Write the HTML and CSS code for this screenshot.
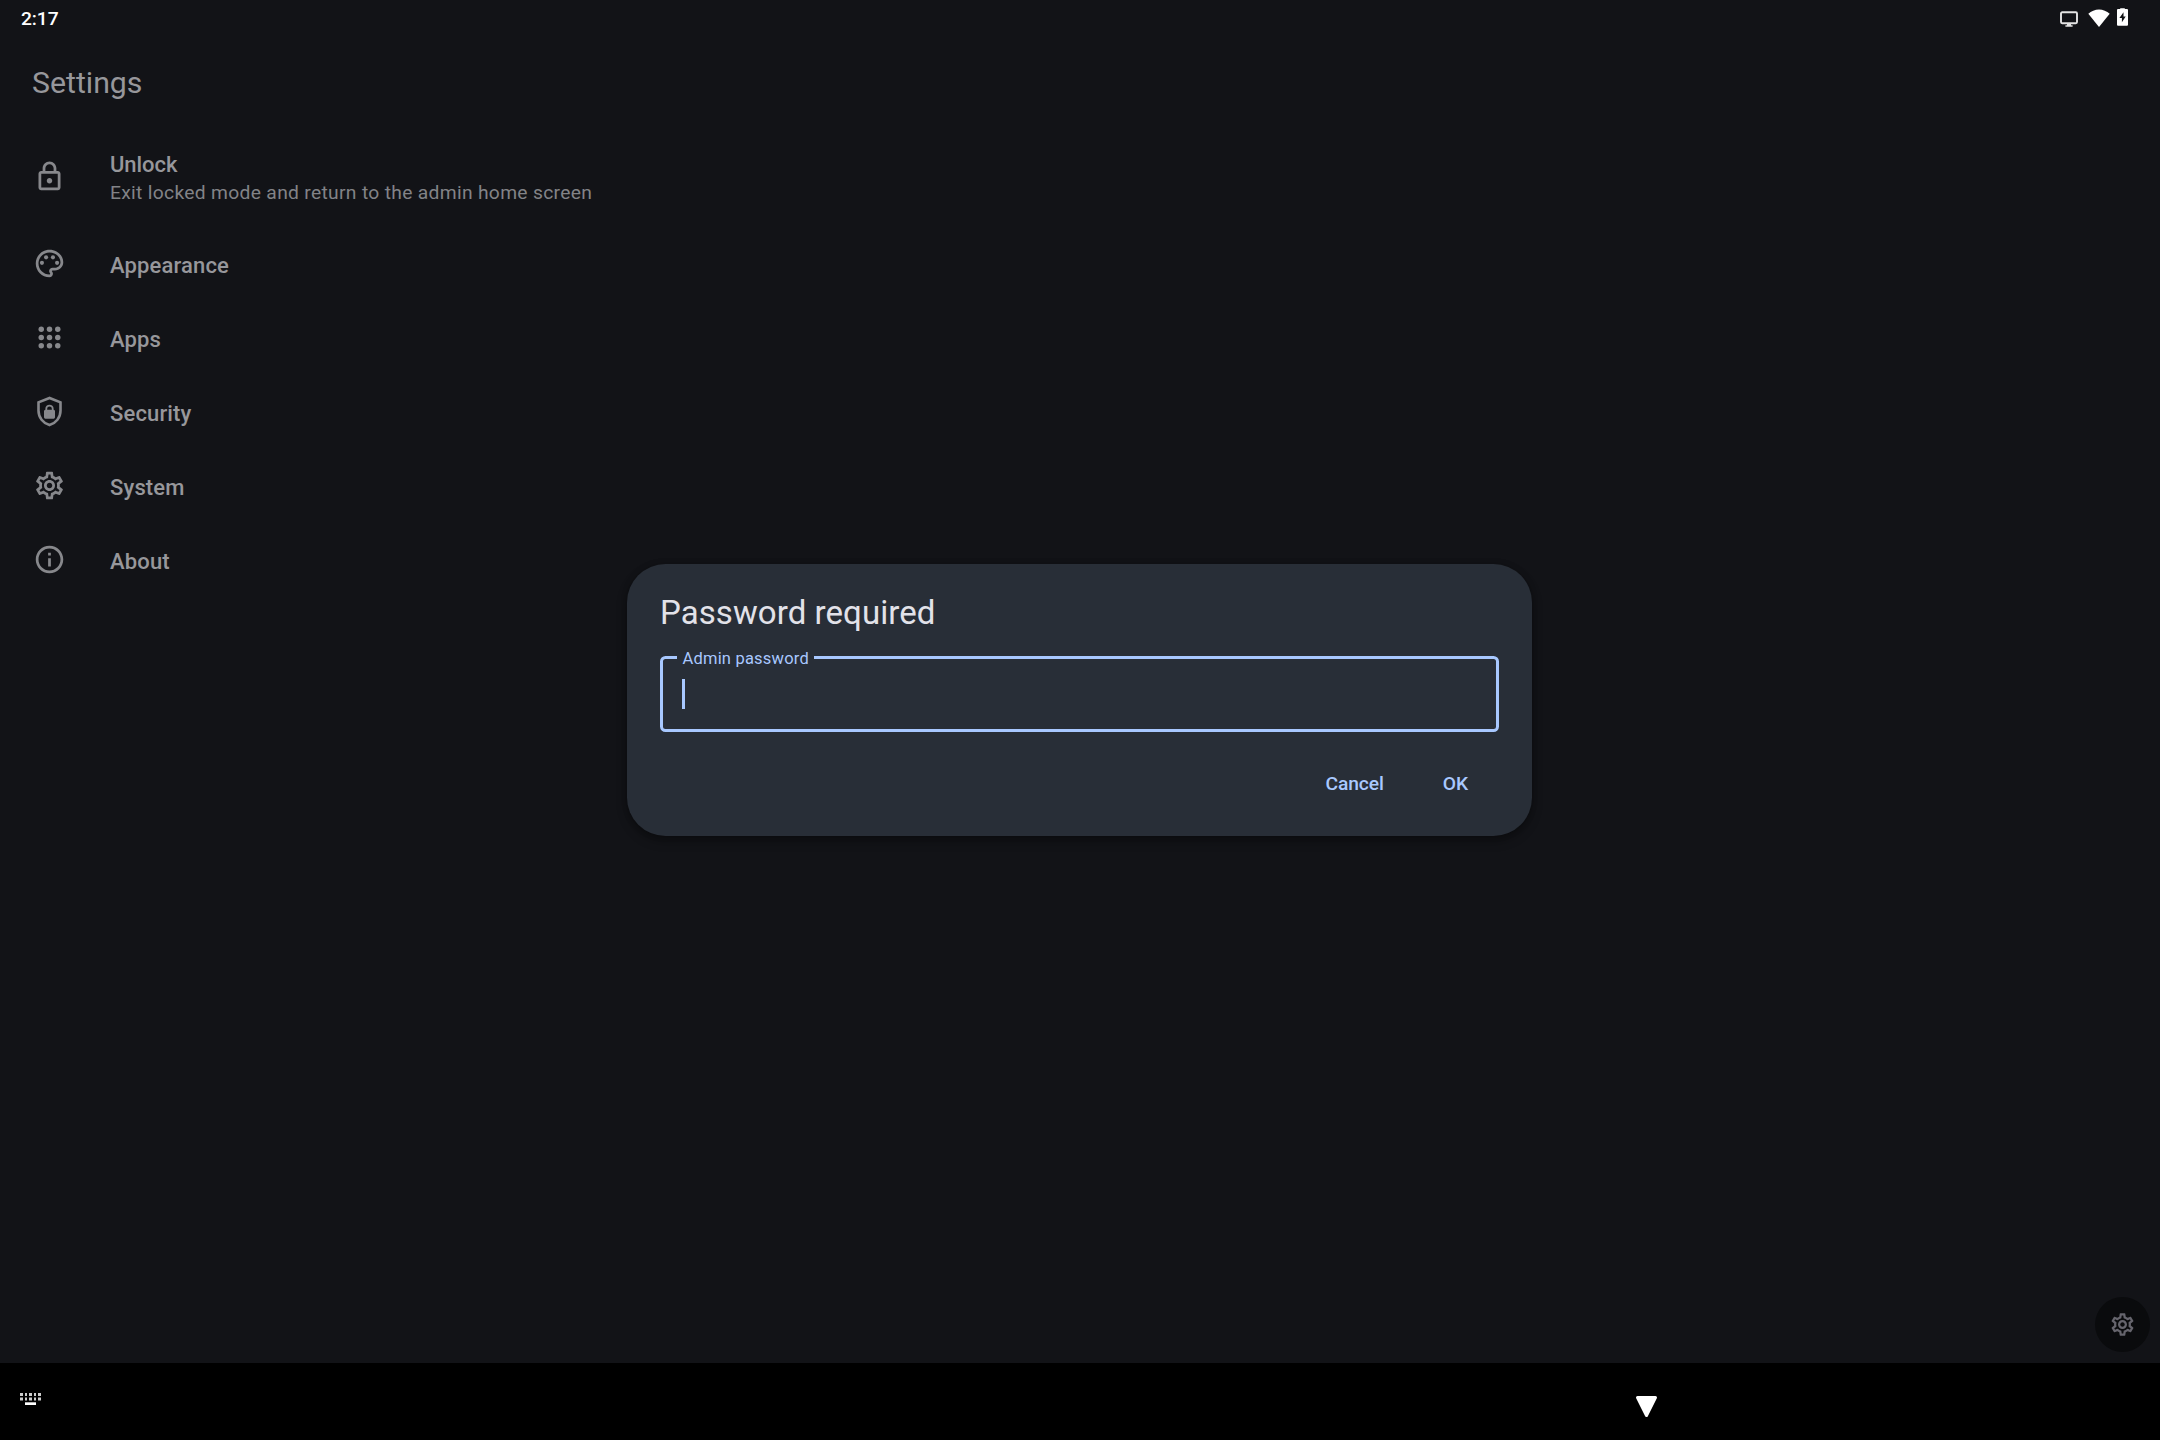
FILE: index.html
```html
<!DOCTYPE html>
<html lang="en">
<head>
<meta charset="utf-8">
<title>Settings</title>
<link rel="stylesheet" href="styles.css">
</head>
<body>
<svg class="defs" width="0" height="0" aria-hidden="true">
  <symbol id="gear" viewBox="0 0 24 24"><path d="M19.43 12.98c.04-.32.07-.64.07-.98 0-.34-.03-.66-.07-.98l2.11-1.65c.19-.15.24-.42.12-.64l-2-3.46c-.09-.16-.26-.25-.44-.25-.06 0-.12.01-.17.03l-2.49 1c-.52-.4-1.08-.73-1.69-.98l-.38-2.65C14.46 2.18 14.25 2 14 2h-4c-.25 0-.46.18-.49.42l-.38 2.65c-.61.25-1.17.59-1.69.98l-2.49-1c-.06-.02-.12-.03-.18-.03-.17 0-.34.09-.43.25l-2 3.46c-.13.22-.07.49.12.64l2.11 1.65c-.04.32-.07.65-.07.98 0 .33.03.66.07.98l-2.11 1.65c-.19.15-.24.42-.12.64l2 3.46c.09.16.26.25.44.25.06 0 .12-.01.17-.03l2.49-1c.52.4 1.08.73 1.69.98l.38 2.65c.03.24.24.42.49.42h4c.25 0 .46-.18.49-.42l.38-2.65c.61-.25 1.17-.59 1.69-.98l2.49 1c.06.02.12.03.18.03.17 0 .34-.09.43-.25l2-3.46c.12-.22.07-.49-.12-.64l-2.11-1.65zm-1.98-1.71c.04.31.05.52.05.73 0 .21-.02.43-.05.73l-.14 1.13.89.7 1.08.84-.7 1.21-1.27-.51-1.04-.42-.9.68c-.43.32-.84.56-1.25.73l-1.06.43-.16 1.13-.2 1.35h-1.4l-.19-1.35-.16-1.13-1.06-.43c-.43-.18-.83-.41-1.23-.71l-.91-.7-1.06.43-1.27.51-.7-1.21 1.08-.84.89-.7-.14-1.13c-.03-.31-.05-.54-.05-.74s.02-.43.05-.73l.14-1.13-.89-.7-1.08-.84.7-1.21 1.27.51 1.04.42.9-.68c.43-.32.84-.56 1.25-.73l1.06-.43.16-1.13.2-1.35h1.39l.19 1.35.16 1.13 1.06.43c.43.18.83.41 1.23.71l.91.7 1.06-.43 1.27-.51.7 1.21-1.07.85-.89.7.14 1.13zM12 8c-2.21 0-4 1.79-4 4s1.79 4 4 4 4-1.79 4-4-1.79-4-4-4zm0 6c-1.1 0-2-.9-2-2s.9-2 2-2 2 .9 2 2-.9 2-2 2z"/></symbol>
</svg>
<div class="screen">
  <header class="status">
    <span class="clock">2:17</span>
    <div class="status-icons">
      <svg class="i-cast" viewBox="0 0 18 17"><rect x="1" y="1.2" width="16" height="11" rx="1.2" fill="none" stroke="#e4e4e4" stroke-width="1.9"/><path d="M7 12h4v2.2h1.6v1.6H5.400v-1.600H7z" fill="#e4e4e4"/></svg>
      <svg class="i-wifi" viewBox="0 0 22 18"><path d="M11 18 .3 4.700C3.200 2 7 .4 11 .4S18.800 2 21.700 4.700z" fill="#fff"/></svg>
      <svg class="i-battery" viewBox="0 0 11 18"><path d="M3.200 1V.2h4.600V1H10q1 0 1 1v14.800q0 1-1 1H1q-1 0-1-1V2q0-1 1-1z" fill="#fff"/><path d="M6.500 4.300 2.400 10h2.500v4.300L8.700 8.600H6.500z" fill="#121317"/></svg>
    </div>
  </header>
  <h1 class="title">Settings</h1>
  <main class="list">
    <div class="row row-tall">
      <svg class="icon" viewBox="0 0 24 24"><path d="M18 8h-1V6c0-2.760-2.240-5-5-5S7 3.240 7 6v2H6c-1.100 0-2 .9-2 2v10c0 1.100.9 2 2 2h12c1.100 0 2-.9 2-2V10c0-1.100-.9-2-2-2zM9 6c0-1.660 1.340-3 3-3s3 1.340 3 3v2H9V6zm9 14H6V10h12v10zm-6-3c1.100 0 2-.9 2-2s-.9-2-2-2-2 .9-2 2 .9 2 2 2z"/></svg>
      <div class="texts"><div class="name">Unlock</div><div class="sub">Exit locked mode and return to the admin home screen</div></div>
    </div>
    <div class="row">
      <svg class="icon" viewBox="0 0 24 24"><path d="M12 22C6.490 22 2 17.510 2 12S6.490 2 12 2s10 4.040 10 9c0 3.310-2.690 6-6 6h-1.770c-.28 0-.5.22-.5.5 0 .12.05.23.13.33.41.47.64 1.060.64 1.670 0 1.380-1.120 2.500-2.500 2.500zm0-18c-4.410 0-8 3.590-8 8s3.590 8 8 8c.28 0 .5-.22.5-.5 0-.16-.08-.28-.14-.35-.41-.46-.63-1.050-.63-1.650 0-1.380 1.120-2.500 2.500-2.500H16c2.210 0 4-1.790 4-4 0-3.860-3.590-7-8-7z"/><circle cx="6.500" cy="11.500" r="1.500"/><circle cx="9.500" cy="7.500" r="1.500"/><circle cx="14.500" cy="7.500" r="1.500"/><circle cx="17.500" cy="11.500" r="1.500"/></svg>
      <div class="name">Appearance</div>
    </div>
    <div class="row">
      <svg class="icon" viewBox="0 0 24 24"><circle cx="6" cy="6" r="2"/><circle cx="12" cy="6" r="2"/><circle cx="18" cy="6" r="2"/><circle cx="6" cy="12" r="2"/><circle cx="12" cy="12" r="2"/><circle cx="18" cy="12" r="2"/><circle cx="6" cy="18" r="2"/><circle cx="12" cy="18" r="2"/><circle cx="18" cy="18" r="2"/></svg>
      <div class="name">Apps</div>
    </div>
    <div class="row">
      <svg class="icon" viewBox="0 0 24 24"><path d="M12 2.150 4 5.300V11.500c0 4.900 3.300 8.900 8 10.400 4.700-1.500 8-5.500 8-10.400V5.300z" fill="none" stroke="currentColor" stroke-width="1.900"/><path d="M9 10.700V10a3 3 0 0 1 6 0v.7q1 .1 1 1v4.500q0 1-1 1H9q-1 0-1-1v-4.500q0-.9 1-1zm1.300 0h3.400V10a1.700 1.700 0 0 0-3.400 0z"/></svg>
      <div class="name">Security</div>
    </div>
    <div class="row">
      <svg class="icon"><use href="#gear"/></svg>
      <div class="name">System</div>
    </div>
    <div class="row">
      <svg class="icon" viewBox="0 0 24 24"><path d="M11 7h2v2h-2zm0 4h2v6h-2zm1-9C6.480 2 2 6.480 2 12s4.480 10 10 10 10-4.480 10-10S17.520 2 12 2zm0 18c-4.410 0-8-3.590-8-8s3.590-8 8-8 8 3.590 8 8-3.590 8-8 8z"/></svg>
      <div class="name">About</div>
    </div>
  </main>
  <footer class="nav">
    <svg class="i-keys" viewBox="0 0 21 13"><path d="M0 0h3v3H0zM5 0h2v3H5zM9 0h3v3H9zM14 0h2v3h-2zM18 0h3v3h-3zM0 4.500h3v3H0zM5 4.500h2v3H5zM9 4.500h3v3H9zM14 4.500h2v3h-2zM18 4.500h3v3h-3z" fill="#ccc"/><path d="M5 9.300h11v2.700H5z" fill="#fff"/></svg>
    <svg class="i-back" viewBox="0 0 23 22"><path d="M2.500 1.500h18L11.500 19.500z" fill="#fff" stroke="#fff" stroke-width="3" stroke-linejoin="round"/></svg>
  </footer>
</div>
<div class="fab"><svg class="fab-icon"><use href="#gear"/></svg></div>
<section class="dialog">
  <h2 class="dialog-title">Password required</h2>
  <div class="field"><span class="label">Admin password</span><span class="caret"></span></div>
  <div class="actions"><span>Cancel</span><span>OK</span></div>
</section>
</body>
</html>
```
FILE: styles.css
```css
* { box-sizing: border-box; }
body { margin: 0; background: #121317; font-family: Roboto, "Liberation Sans", sans-serif; overflow: hidden; }
.defs { display: block; position: absolute; }
.screen { width: 2160px; height: 1440px; display: flex; flex-direction: column; }
.status { height: 36px; padding: 0 32px 0 21px; display: flex; justify-content: space-between; align-items: flex-start; }
.clock { color: #fff; font-size: 19.25px; font-weight: 500; line-height: 22px; margin-top: 8px; letter-spacing: -.1px; }
.status-icons { display: flex; align-items: flex-start; }
.i-cast { width: 18px; height: 17px; margin: 11px 10px 0 0; }
.i-wifi { width: 22px; height: 18px; margin: 9px 7.5px 0 0; }
.i-battery { width: 11px; height: 18px; margin: 8px 0 0; }
.title { margin: 0; padding: 0 32px; height: 91px; line-height: 94px; font-size: 30.25px; font-weight: 400; color: #97979b; }
.list { flex: 1; padding: 11px 33px; color: #87888c; }
.row { height: 74px; display: flex; align-items: center; gap: 44px; }
.row .name { padding-top: 5px; }
.row-tall { height: 88px; padding-top: 1px; }
.row-tall .name { padding-top: 0; letter-spacing: -.05px; }
.row-tall .icon { margin-top: -13px; }
.row-tall .texts { margin-top: -9px; }
.icon { width: 33px; height: 33px; fill: currentColor; flex: none; }
.name { font-size: 22px; line-height: 30px; font-weight: 500; letter-spacing: .15px; color: #97979b; }
.sub { font-size: 19.25px; line-height: 26px; letter-spacing: .31px; color: #828387; }
.nav { height: 77px; background: #000; display: flex; align-items: flex-start; padding-left: 20px; }
.i-keys { width: 21px; height: 13px; margin-top: 30px; }
.i-back { width: 23px; height: 22px; margin: 33px 0 0 1594px; }
.fab { position: absolute; left: 2095px; top: 1297px; width: 55px; height: 55px; border-radius: 50%; background: #0a0b0d; display: flex; align-items: center; justify-content: center; }
.fab-icon { width: 27px; height: 27px; fill: #66656d; }
.dialog { position: absolute; left: 627px; top: 564px; width: 905px; height: 272px; border-radius: 38.5px; background: #282e37; padding: 26px 33px; box-shadow: 0 5px 11px rgba(0,0,0,.32), 0 0 6px rgba(0,0,0,.2); }
.dialog-title { margin: 0; height: 66px; line-height: 45px; font-size: 33px; font-weight: 400; color: #e2e2e9; letter-spacing: .07px; }
.field { position: relative; height: 76px; border: 3px solid #a8c8ff; border-radius: 5.5px; padding: 20px 19px; }
.label { position: absolute; left: 14px; top: -11px; padding: 0 5.500px; background: #282e37; color: #a8c8ff; font-size: 16.5px; line-height: 22px; letter-spacing: .2px; white-space: nowrap; }
.caret { display: block; width: 3px; height: 30px; background: #a8c8ff; }
.actions { display: flex; justify-content: flex-end; gap: 59px; padding: 40px 31px 0 0; color: #a8c8ff; font-size: 19.25px; line-height: 24px; font-weight: 500; letter-spacing: -.1px; }
```
